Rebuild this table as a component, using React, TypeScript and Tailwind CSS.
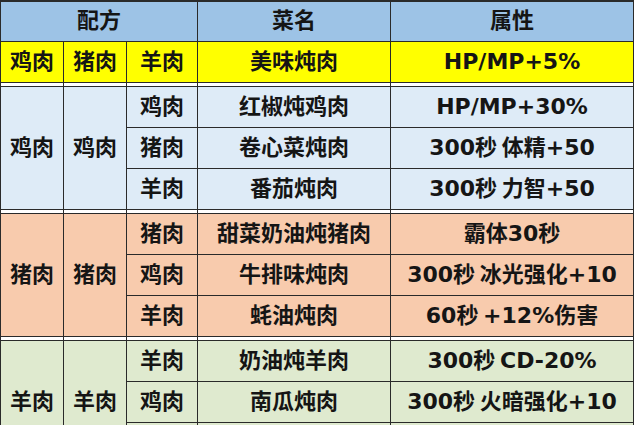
import React from "react";

const groups: { bg: string; a: string; b: string; rows: { c: string; dish: string; attr: string }[] }[] = [
  {
    bg: "bg-[#deebf7]",
    a: "鸡肉",
    b: "鸡肉",
    rows: [
      { c: "鸡肉", dish: "红椒炖鸡肉", attr: "HP/MP+30%" },
      { c: "猪肉", dish: "卷心菜炖肉", attr: "300秒 体精+50" },
      { c: "羊肉", dish: "番茄炖肉", attr: "300秒 力智+50" },
    ],
  },
  {
    bg: "bg-[#f8cbad]",
    a: "猪肉",
    b: "猪肉",
    rows: [
      { c: "猪肉", dish: "甜菜奶油炖猪肉", attr: "霸体30秒" },
      { c: "鸡肉", dish: "牛排味炖肉", attr: "300秒 冰光强化+10" },
      { c: "羊肉", dish: "蚝油炖肉", attr: "60秒 +12%伤害" },
    ],
  },
  {
    bg: "bg-[#dfeacf]",
    a: "羊肉",
    b: "羊肉",
    rows: [
      { c: "羊肉", dish: "奶油炖羊肉", attr: "300秒 CD-20%" },
      { c: "鸡肉", dish: "南瓜炖肉", attr: "300秒 火暗强化+10" },
    ],
  },
];

const cell = "border border-[#2a2a2a] p-0 text-center align-middle";

function Spacer() {
  return (
    <tr className="h-[4px]">
      {[0, 1, 2, 3, 4].map((i) => (
        <td key={i} className="border-x border-[#2a2a2a] bg-white p-0" />
      ))}
    </tr>
  );
}

export default function App() {
  return (
    <div
      className="w-[636px] h-[425px] overflow-hidden bg-white text-[#151515]"
      style={{ fontFamily: '"DejaVu Sans", "Noto Sans CJK SC", sans-serif' }}
    >
      <table className="w-[634px] table-fixed border-collapse border-t-2 border-t-[#2a2a2a] text-[22px] font-bold leading-none [word-spacing:-3px]">
        <colgroup>
          <col className="w-[63px]" />
          <col className="w-[63px]" />
          <col className="w-[71px]" />
          <col className="w-[193px]" />
          <col />
        </colgroup>
        <tbody>
          <tr className="h-[40px] bg-[#9dc3e6]">
            <td colSpan={3} className={cell}>配方</td>
            <td className={cell}>菜名</td>
            <td className={cell}>属性</td>
          </tr>
          <tr className="h-[41px] bg-[#ffff00]">
            <td className={cell}>鸡肉</td>
            <td className={cell}>猪肉</td>
            <td className={cell}>羊肉</td>
            <td className={cell}>美味炖肉</td>
            <td className={cell}>HP/MP+5%</td>
          </tr>
          {groups.map((g, gi) => (
            <React.Fragment key={gi}>
              <Spacer />
              {g.rows.map((r, ri) => (
                <tr key={ri} className={`h-[41px] ${g.bg}`}>
                  {ri === 0 && (
                    <>
                      <td rowSpan={3} className={cell}>{g.a}</td>
                      <td rowSpan={3} className={cell}>{g.b}</td>
                    </>
                  )}
                  <td className={cell}>{r.c}</td>
                  <td className={cell}>{r.dish}</td>
                  <td className={cell}>{r.attr}</td>
                </tr>
              ))}
              {gi === 2 && (
                <tr className={`h-[41px] ${g.bg}`}>
                  <td className={cell} />
                  <td className={cell} />
                  <td className={cell} />
                </tr>
              )}
            </React.Fragment>
          ))}
        </tbody>
      </table>
    </div>
  );
}
